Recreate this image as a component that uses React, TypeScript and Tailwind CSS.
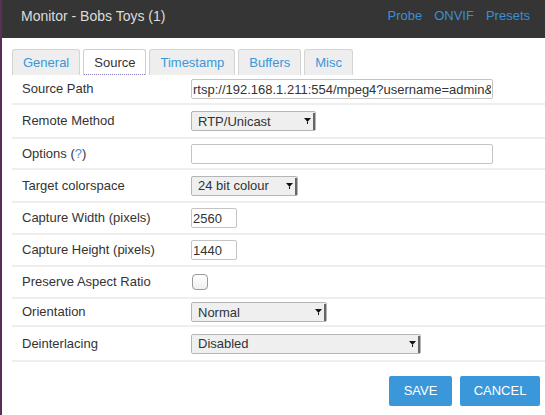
import React from "react";

type Row = {
  label: React.ReactNode;
  h: string;
  control: React.ReactNode;
};

const Select: React.FC<{ value: string; w: string }> = ({ value, w }) => (
  <div
    className={`relative ${w} h-[20px] flex items-center bg-[#efefef] border border-[#b5b5b5] rounded-[2px] pl-[6px] text-[13px] text-[#333] leading-none`}
  >
    <span>{value}</span>
    <svg
      className="absolute right-[4px] top-[6px]"
      width="7"
      height="6"
      viewBox="0 0 7 6"
    >
      <path d="M0 0h7L3.5 4z" fill="#111" />
      <rect x="3" y="4" width="1" height="2" fill="#111" />
    </svg>
    <div className="absolute right-0 top-[1px] bottom-0 w-[2px] bg-[#666]" />
  </div>
);

const TextBox: React.FC<{ value?: string; w: string }> = ({ value = "", w }) => (
  <input
    readOnly
    value={value}
    className={`${w} h-[20px] px-[1px] border border-[#c4c4c4] rounded-[2px] bg-white text-[13px] text-[#333] outline-none font-['Liberation_Sans',Arial,sans-serif]`}
  />
);

const tabs = ["General", "Source", "Timestamp", "Buffers", "Misc"];

export default function App() {
  const rows: Row[] = [
    {
      label: "Source Path",
      h: "h-[30px]",
      control: (
        <TextBox
          w="w-[302px]"
          value="rtsp://192.168.1.211:554/mpeg4?username=admin&password=secret"
        />
      ),
    },
    {
      label: "Remote Method",
      h: "h-[34px]",
      control: <Select value="RTP/Unicast" w="w-[125px]" />,
    },
    {
      label: (
        <>
          Options (<span className="text-[#3a97d9]">?</span>)
        </>
      ),
      h: "h-[31px]",
      control: <TextBox w="w-[302px]" />,
    },
    {
      label: "Target colorspace",
      h: "h-[33px]",
      control: <Select value="24 bit colour" w="w-[107px]" />,
    },
    {
      label: "Capture Width (pixels)",
      h: "h-[32px]",
      control: <TextBox w="w-[46px]" value="2560" />,
    },
    {
      label: "Capture Height (pixels)",
      h: "h-[32px]",
      control: <TextBox w="w-[46px]" value="1440" />,
    },
    {
      label: "Preserve Aspect Ratio",
      h: "h-[32px]",
      control: (
        <div className="ml-[1px] w-[16px] h-[16px] rounded-[4px] border border-[#9a9a9a] bg-gradient-to-b from-white to-[#f0f0f0]" />
      ),
    },
    {
      label: "Orientation",
      h: "h-[28px]",
      control: <Select value="Normal" w="w-[136px]" />,
    },
    {
      label: "Deinterlacing",
      h: "h-[35px]",
      control: <Select value="Disabled" w="w-[230px]" />,
    },
  ];

  return (
    <div className="w-[545px] h-[415px] overflow-hidden bg-white border-l-2 border-[#5c2d55] font-['Liberation_Sans',Arial,sans-serif]">
      <div className="h-[38px] bg-[#353535] flex items-start justify-between pl-[19px] pr-[15px] pt-[8px]">
        <span className="text-[14px] leading-[16px] text-[#dcdcdc]">
          Monitor - Bobs Toys (1)
        </span>
        <div className="flex gap-[12px] text-[13px] leading-[16px] text-[#3a8fd3]">
          <span>Probe</span>
          <span>ONVIF</span>
          <span>Presets</span>
        </div>
      </div>

      <div className="flex gap-[3px] ml-[10px] mt-[11px]">
        {tabs.map((t) =>
          t === "Source" ? (
            <div
              key={t}
              className="relative h-[26px] px-[10px] flex items-center bg-white border border-b-0 border-[#cfcfcf] rounded-t-[3px] text-[13px] text-[#333]"
            >
              {t}
              <div className="absolute left-0 right-0 bottom-0 border-t border-dotted border-[#8a7fc0]" />
            </div>
          ) : (
            <div
              key={t}
              className="h-[26px] px-[10px] flex items-center bg-[#eeeeee] border border-b-0 border-[#d4d4d4] rounded-t-[3px] text-[13px] text-[#3a97d9]"
            >
              {t}
            </div>
          ),
        )}
      </div>

      <div className="ml-[10px]">
        {rows.map((r, i) => (
          <div
            key={i}
            className={`${r.h} flex items-center border-b-2 border-[#eeeeee] text-[13px] text-[#333]`}
          >
            <div className="w-[179px] pl-[10px]">{r.label}</div>
            {r.control}
          </div>
        ))}
      </div>

      <div className="flex justify-end gap-[8px] pr-[5px] mt-[14px]">
        <button className="w-[63px] h-[30px] bg-[#3a97d9] rounded-[2px] text-[13px] text-white">
          SAVE
        </button>
        <button className="w-[80px] h-[30px] bg-[#3a97d9] rounded-[2px] text-[13px] text-white">
          CANCEL
        </button>
      </div>
    </div>
  );
}
